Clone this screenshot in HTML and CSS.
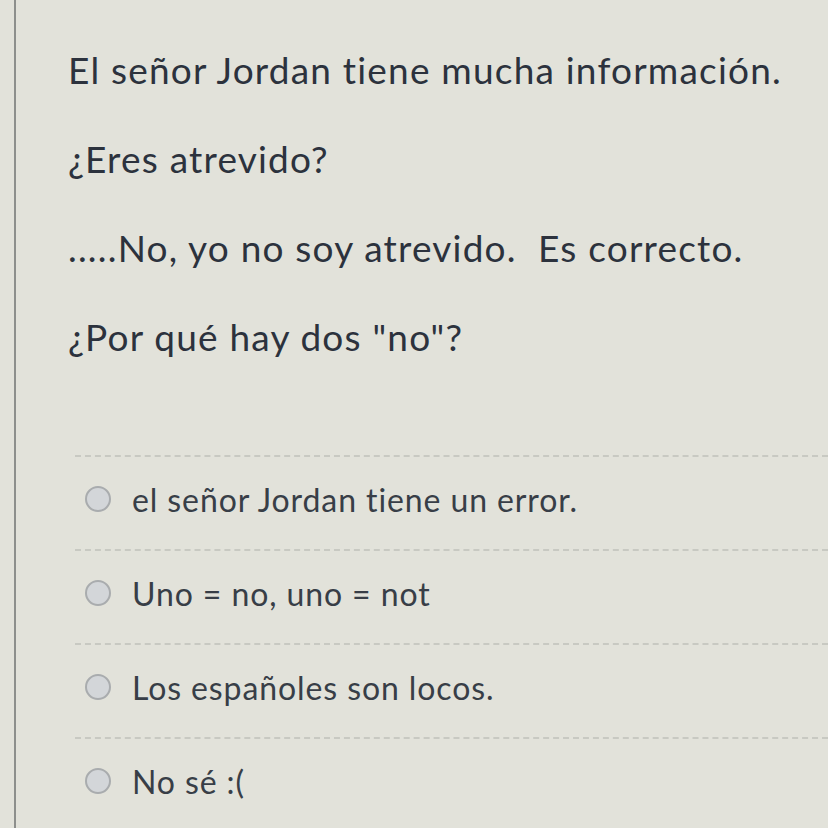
FILE: index.html
```html
<!DOCTYPE html>
<html lang="es">
<head>
<meta charset="utf-8">
<link rel="stylesheet" href="styles.css">
</head>
<body>
<div class="page">
  <div class="question">
    <p class="line">El señor Jordan tiene mucha información.</p>
    <p class="line">¿Eres atrevido?</p>
    <p class="line">.....No, yo no soy atrevido.&nbsp; Es correcto.</p>
    <p class="line">¿Por qué hay dos "no"?</p>
  </div>
  <div class="answers">
    <div class="answer"><span class="radio"></span><span class="label">el señor Jordan tiene un error.</span></div>
    <div class="answer"><span class="radio"></span><span class="label">Uno = no, uno = not</span></div>
    <div class="answer"><span class="radio"></span><span class="label">Los españoles son locos.</span></div>
    <div class="answer"><span class="radio"></span><span class="label">No sé :(</span></div>
  </div>
</div>
</body>
</html>
```
FILE: styles.css
```css
html, body {
  margin: 0;
  padding: 0;
  background: #e2e2da;
}
body {
  font-family: Lato, "Open Sans", sans-serif;
  font-variant-ligatures: none;
  color: #2c323d;
  width: 828px;
  height: 828px;
  overflow: hidden;
}
.page {
  margin-left: 14px;
  border-left: 2px solid #8d8f8c;
  height: 828px;
  padding-left: 52px;
  padding-top: 53px;
  box-sizing: border-box;
}
.question .line {
  margin: 0 0 55px 0;
  font-size: 37px;
  letter-spacing: 1.2px;
  line-height: 34px;
}
.answers {
  margin-top: 101px;
  margin-left: 7px;
}
.answer {
  border-top: 2px dashed #c8c9c2;
  height: 94px;
  box-sizing: border-box;
  padding-bottom: 8px;
  display: flex;
  align-items: center;
  gap: 21px;
  padding-left: 10px;
  font-size: 32px;
  letter-spacing: 0.9px;
  color: #383e47;
}
.radio {
  width: 26px;
  height: 26px;
  border-radius: 50%;
  border: 2px solid #a9acae;
  background: #d3d6d9;
  box-sizing: border-box;
  flex: none;
}
```
